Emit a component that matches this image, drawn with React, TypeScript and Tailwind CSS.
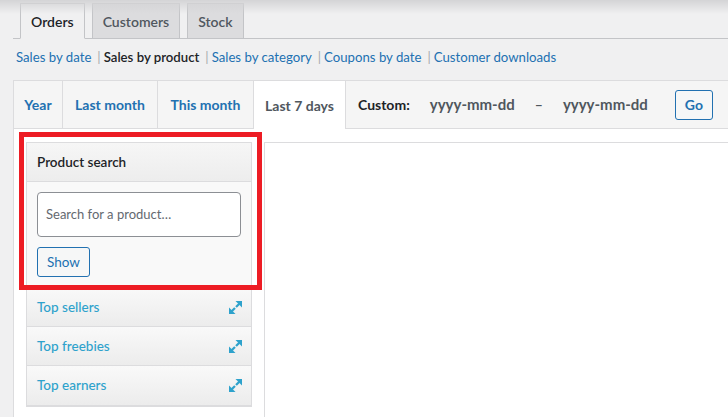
import React from 'react'

const font = { fontFamily: 'Lato, "Open Sans", Arial, sans-serif' }

const ExpandIcon = () => (
  <svg width="13" height="13" viewBox="0 0 12 12" className="text-[#2ea2cc]">
    <polygon points="6,0 12,0 12,6" fill="currentColor" />
    <line x1="9.5" y1="2.5" x2="6.5" y2="5.5" stroke="currentColor" strokeWidth="2" />
    <polygon points="0,6 0,12 6,12" fill="currentColor" />
    <line x1="2.5" y1="9.5" x2="5.5" y2="6.5" stroke="currentColor" strokeWidth="2" />
  </svg>
)

export default function App() {
  const navTabs = ['Orders', 'Customers', 'Stock']
  const links = ['Sales by date', 'Sales by product', 'Sales by category', 'Coupons by date', 'Customer downloads']
  const ranges = [
    { label: 'Year', w: 'w-[49px]' },
    { label: 'Last month', w: 'w-[95px]' },
    { label: 'This month', w: 'w-[96px]' },
  ]
  const widgets = ['Top sellers', 'Top freebies', 'Top earners']

  return (
    <div className="relative w-full h-[417px] overflow-hidden bg-[#f0f0f1] flex flex-col" style={font}>
      {/* shadow from admin bar */}
      <div className="absolute top-0 left-0 right-0 h-[14px] bg-gradient-to-b from-[#d4d4d6] to-transparent pointer-events-none z-10" />

      {/* main nav tabs */}
      <div className="ml-[13px] pt-[3px] flex border-b border-[#c3c4c7] h-[39px]">
        {navTabs.map((t, i) => (
          <div
            key={t}
            className={`${i === 0 ? 'bg-[#f0f0f1] border-b-[#f0f0f1] text-[#1d2327]' : 'bg-[#dcdcde] text-[#50575e]'} ml-[7px] px-[10px] h-[36px] border border-[#c3c4c7] flex items-center text-[14px] font-semibold`}
          >
            {t}
          </div>
        ))}
      </div>

      {/* subsubsub */}
      <div className="pl-[16px] mt-[6px] h-[26px] flex items-center text-[13.2px] text-[#2271b1]">
        {links.map((l, i) => (
          <span key={l} className="flex items-center">
            {i > 0 && <span className="text-[#a7aaad] ml-[6px] mr-[3px]">|</span>}
            <span className={i === 1 ? 'text-[#1d2327] font-semibold' : ''}>{l}</span>
          </span>
        ))}
      </div>

      {/* postbox */}
      <div className="ml-[13px] mt-[9px] flex-1 bg-white border-l border-t border-[#dcdcde] flex flex-col">
        <div className="h-[48px] flex bg-[#f5f5f5] border-b border-[#dcdcde] text-[14px] font-bold">
          {ranges.map((r) => (
            <div key={r.label} className={`${r.w} flex items-center justify-center border-r border-[#dcdcde] text-[#2271b1]`}>
              {r.label}
            </div>
          ))}
          <div className="w-[92px] -mb-px bg-white border-r border-[#dcdcde] flex items-center justify-center text-[#50575e]">
            Last 7 days
          </div>
          <div className="flex-1 flex items-center pl-[12px]">
            <span className="text-[#1d2327]">Custom:</span>
            <span className="ml-[20px] text-[15px] text-[#50575e]">yyyy-mm-dd</span>
            <span className="ml-[20px] text-[#50575e]">–</span>
            <span className="ml-[20px] text-[15px] text-[#50575e]">yyyy-mm-dd</span>
            <button className="ml-[27px] w-[38px] h-[30px] rounded-[3px] border border-[#2271b1] bg-[#f6f7f7] text-[#2271b1] text-[14px] font-bold">
              Go
            </button>
          </div>
        </div>

        <div className="flex-1 flex">
          {/* sidebar */}
          <div className="w-[250px] pt-[13px] px-[12px] bg-white">
            <div className="border border-[#dcdcde] bg-[#f9f9f9]">
              <div className="h-[39px] flex items-center px-[10px] bg-gradient-to-b from-[#f6f6f6] to-[#ededed] border-b border-[#dcdcde] text-[13.5px] font-semibold text-[#1d2327]">
                Product search
              </div>
              <div className="p-[10px]">
                <div className="h-[45px] rounded-[4px] border border-[#8c8f94] bg-white flex items-center px-[8px] text-[13px] text-[#646970]">
                  Search for a product…
                </div>
                <button className="mt-[10px] h-[30px] px-[9px] rounded-[3px] border border-[#2271b1] bg-[#f6f7f7] text-[#2271b1] text-[13.5px]">
                  Show
                </button>
              </div>
            </div>
            <div className="border-x border-[#dcdcde] border-b-2 border-b-[#dcdcde]">
              {widgets.map((w, i) => (
                <div
                  key={w}
                  className={`h-[39px] flex items-center justify-between pl-[10px] pr-[9px] bg-gradient-to-b from-[#f9f9f9] to-[#ececec] ${i < 2 ? 'border-b border-[#dcdcde]' : ''}`}
                >
                  <span className="text-[13.5px] font-medium text-[#2ea2cc]">{w}</span>
                  <ExpandIcon />
                </div>
              ))}
            </div>
          </div>
          {/* chart area */}
          <div className="flex-1 pt-[13px] bg-white">
            <div className="h-full border-l border-t border-[#dcdcde]" />
          </div>
        </div>
      </div>

      {/* red highlight annotation */}
      <div className="absolute left-[19px] top-[132px] w-[243px] h-[158px] border-[5px] border-[#ed1c24] pointer-events-none" />
    </div>
  )
}
